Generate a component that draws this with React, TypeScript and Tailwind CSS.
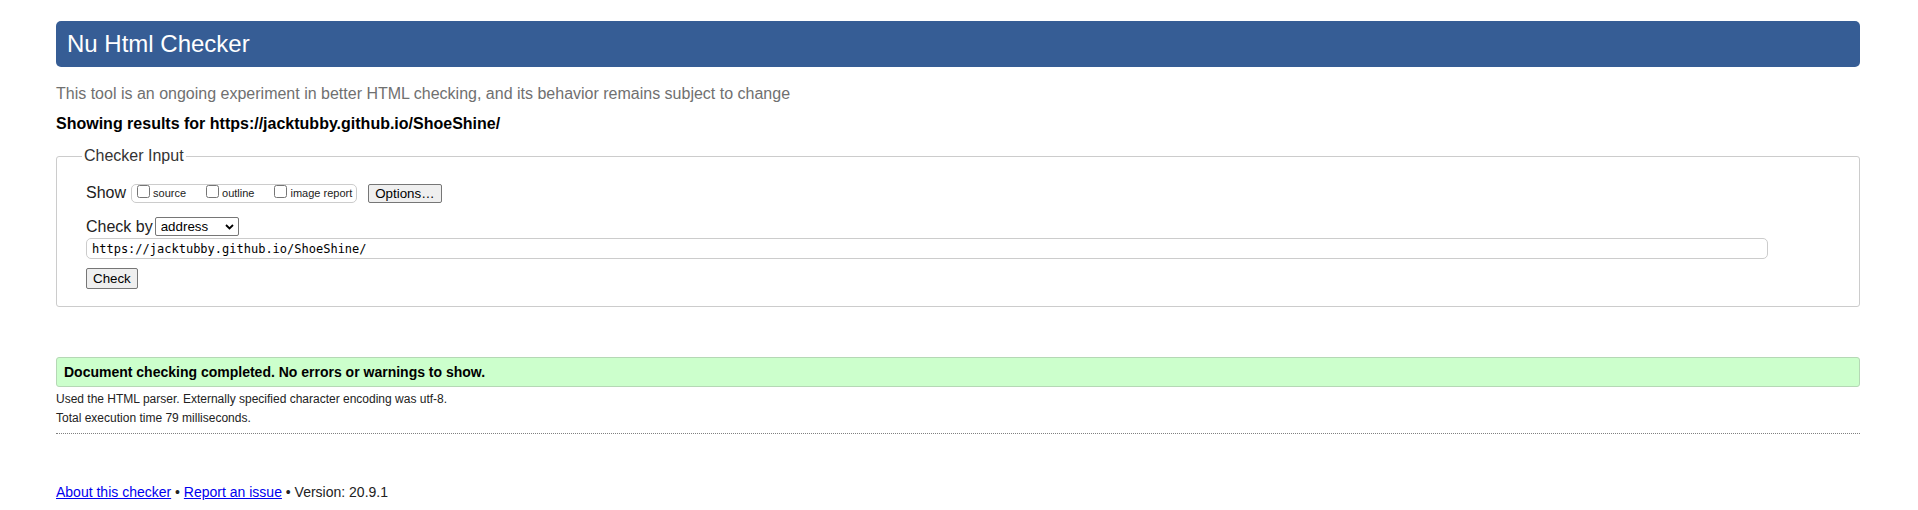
import React from 'react';

const sans = "font-['Liberation_Sans',Arial,sans-serif]";

const ShowOption: React.FC<{ label: string; first?: boolean }> = ({ label, first }) => (
  <label className={`flex items-start ${first ? '' : 'ml-[20px]'}`}>
    <input type="checkbox" className="m-0 w-[13px] h-[13px]" />
    <span className="ml-[3px] text-[11px] leading-[17px] text-[#222]">{label}</span>
  </label>
);

const App: React.FC = () => {
  return (
    <div className={`${sans} w-full min-h-[510px] bg-white pl-[56px] pr-[58px] pt-[21px] text-[#222]`}>
      <h1 className="h-[46px] rounded-[5px] bg-[#365d95] pl-[11px] text-[24px] leading-[46px] font-normal text-white">
        Nu Html Checker
      </h1>
      <p className="mt-[17px] text-[16px] leading-[20px] text-[#707070]">
        This tool is an ongoing experiment in better HTML checking, and its behavior remains subject to change
      </p>
      <p className="mt-[10px] text-[16px] leading-[20px] font-bold text-black">
        Showing results for https://jacktubby.github.io/ShoeShine/
      </p>

      <fieldset className="mt-[13px] rounded-[3px] border border-[#cccccc] pl-[29px] pr-[28px] pt-[19px] pb-[17px]">
        <legend className="-ml-[4px] px-[2px] text-[16px] leading-[18px] text-[#333]">Checker Input</legend>

        <div className="flex items-start h-[19px]">
          <span className="text-[16px] leading-[17px]">Show</span>
          <div className="ml-[5px] flex h-[19px] items-start rounded-[5px] border border-[#cccccc] pl-[5px] pr-[4px]">
            <ShowOption label="source" first />
            <ShowOption label="outline" />
            <ShowOption label="image report" />
          </div>
          <button
            type="button"
            className="ml-[11px] h-[19px] rounded-[2px] border border-[#767676] bg-[#efefef] px-[6px] text-[13.33px] leading-[17px] text-black"
          >
            Options…
          </button>
        </div>

        <div className="mt-[14px] flex h-[19px] items-start">
          <span className="mt-[1px] text-[16px] leading-[17px]">Check by</span>
          <div className="relative ml-[2px] flex">
            <select className="h-[19px] w-[84px] appearance-none rounded-[2px] border border-[#767676] bg-white pl-[5px] text-[13.33px] leading-[17px] text-black">
              <option>address</option>
              <option>file upload</option>
              <option>text input</option>
            </select>
            <svg className="pointer-events-none absolute right-[5px] top-[7px]" width="9" height="6" viewBox="0 0 9 6">
              <polyline points="1,1 4.5,4.5 8,1" fill="none" stroke="#000" strokeWidth="1.8" />
            </svg>
          </div>
        </div>

        <input
          type="text"
          readOnly
          value="https://jacktubby.github.io/ShoeShine/"
          className="mt-[2px] block h-[21px] w-[1682px] rounded-[5px] border border-[#cccccc] px-[5px] font-['DejaVu_Sans_Mono',monospace] text-[12px] text-black"
        />

        <button
          type="button"
          className="mt-[9px] block h-[21px] rounded-[2px] border border-[#767676] bg-[#efefef] px-[6px] text-[13.33px] leading-[19px] text-black"
        >
          Check
        </button>
      </fieldset>

      <div className="mt-[50px] h-[30px] rounded-[3px] border border-[#b5d8b5] bg-[#ccffcc] px-[7px] text-[14px] leading-[28px] font-bold text-black">
        Document checking completed. No errors or warnings to show.
      </div>
      <div className="mt-[3px] border-b border-dotted border-[#808080] pb-[5px] text-[12px] leading-[19px] text-[#222]">
        <p>Used the HTML parser. Externally specified character encoding was utf-8.</p>
        <p>Total execution time 79 milliseconds.</p>
      </div>

      <p className="mt-[50px] text-[14px] leading-[16px] text-[#222]">
        <a href="#" className="text-[#0000ee] underline">About this checker</a>
        {' • '}
        <a href="#" className="text-[#0000ee] underline">Report an issue</a>
        {' • Version: 20.9.1'}
      </p>
    </div>
  );
};

export default App;
